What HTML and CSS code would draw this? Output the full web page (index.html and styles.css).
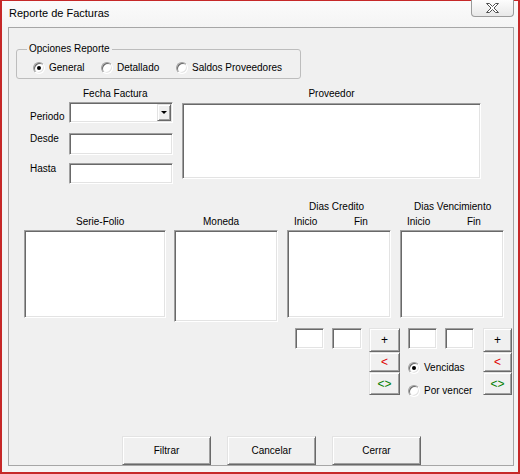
FILE: index.html
```html
<!DOCTYPE html>
<html>
<head>
<meta charset="utf-8">
<title>Reporte de Facturas</title>
<link rel="stylesheet" href="styles.css">
</head>
<body>
<div class="window">
  <div class="titlebar">
    <span class="title">Reporte de Facturas</span>
    <div class="close">
      <svg width="13" height="10" viewBox="0 0 13 10"><path d="M0.5 0.5h3l3 3 3-3h3l-4.5 4.5 4.5 4.5h-3l-3-3-3 3h-3l4.5-4.5z" fill="#fff" stroke="#505050" stroke-width="1"/></svg>
    </div>
  </div>
  <div class="client">
    <fieldset class="group">
      <legend>Opciones Reporte</legend>
      <div class="radios">
        <div class="radio"><span class="dot on"></span>General</div>
        <div class="radio"><span class="dot"></span>Detallado</div>
        <div class="radio"><span class="dot"></span>Saldos Proveedores</div>
      </div>
    </fieldset>

    <div class="row-b">
      <div class="fecha">
        <div class="hdr fecha-hdr">Fecha Factura</div>
        <div class="fecha-grid">
          <span class="lbl lbl-periodo">Periodo</span>
          <div class="sunken combo"><span class="btn combo-btn"><span class="tri"></span></span></div>
          <span class="lbl lbl-desde">Desde</span>
          <div class="sunken field field-desde"></div>
          <span class="lbl lbl-hasta">Hasta</span>
          <div class="sunken field field-hasta"></div>
        </div>
      </div>
      <div class="prov">
        <div class="hdr center">Proveedor</div>
        <div class="sunken prov-list"></div>
      </div>
    </div>

    <div class="row-c">
      <div class="col col-sf">
        <div class="h1"></div>
        <div class="h2 h2-sf">Serie-Folio</div>
        <div class="sunken list"></div>
      </div>
      <div class="col col-mon">
        <div class="h1"></div>
        <div class="h2 h2-mon">Moneda</div>
        <div class="sunken list list-mon"></div>
      </div>
      <div class="col col-dc">
        <div class="h1 h1-dc">Dias Credito</div>
        <div class="h2 sub"><span class="ini">Inicio</span><span>Fin</span></div>
        <div class="sunken list"></div>
      </div>
      <div class="col col-dv">
        <div class="h1 h1-dv">Dias Vencimiento</div>
        <div class="h2 sub"><span class="ini">Inicio</span><span>Fin</span></div>
        <div class="sunken list"></div>
      </div>
    </div>

    <div class="row-d">
      <div class="sunken small"></div>
      <div class="sunken small small-wide gap8"></div>
      <div class="btncol gap7">
        <button class="btn b1">+</button>
        <button class="btn b2 red">&lt;</button>
        <button class="btn b3 green">&lt;&gt;</button>
      </div>
      <div class="g2 gap8">
        <div class="g2-inputs">
          <div class="sunken small"></div>
          <div class="sunken small"></div>
        </div>
        <div class="g2-radios">
          <div class="radio"><span class="dot on"></span>Vencidas</div>
          <div class="radio"><span class="dot"></span>Por vencer</div>
        </div>
      </div>
      <div class="btncol btncol2 gap9">
        <button class="btn b1">+</button>
        <button class="btn b2 red">&lt;</button>
        <button class="btn b3 green">&lt;&gt;</button>
      </div>
    </div>

    <div class="row-e">
      <button class="btn big">Filtrar</button>
      <button class="btn big">Cancelar</button>
      <button class="btn big">Cerrar</button>
    </div>
  </div>
</div>
</body>
</html>
```

FILE: styles.css
```css
* { box-sizing: border-box; }
html, body { margin: 0; padding: 0; }
body {
  width: 520px;
  height: 474px;
  overflow: hidden;
  font-family: "Liberation Sans", Arial, sans-serif;
  font-size: 10px;
  color: #000;
  background: #fff;
}
.window {
  width: 520px;
  height: 474px;
  border: 2px solid #c62828;
  border-top-width: 1px;
  background: #f4f4f4;
  display: flex;
  flex-direction: column;
}
.titlebar {
  height: 26px;
  flex: none;
  display: flex;
  align-items: flex-start;
  padding-left: 7px;
  background: linear-gradient(#fbfbfb, #f4f4f4);
}
.title { font-size: 11px; line-height: 25px; }
.close {
  margin-left: auto;
  margin-top: -1px;
  margin-right: 4px;
  width: 43px;
  height: 17px;
  border: 1px solid #9b9b9b;
  border-top: none;
  border-radius: 0 0 4px 4px;
  background: linear-gradient(#fdfdfd, #e8e8e8);
  display: flex;
  align-items: center;
  justify-content: center;
}
.close svg { display: block; }
.client {
  flex: 1;
  margin: 0 4px 6px 6px;
  border: 1px solid #a6a6a6;
  background: #f0f0f0;
}

/* group box */
.group {
  margin: 15px 0 0 7px;
  width: 285px;
  padding: 0;
  border: 1px solid #bdbdbd;
  border-radius: 3px;
  min-inline-size: 0;
}
.group legend { margin-left: 10px; padding: 0 2px; line-height: 12px; }
.radios {
  display: grid;
  grid-template-columns: 68px 75px auto;
  padding: 6px 0 3px 16px;
}
.radio {
  display: flex;
  align-items: center;
  height: 14px;
  line-height: 14px;
  white-space: nowrap;
}
.dot {
  flex: none;
  position: relative;
  width: 12px;
  height: 12px;
  margin-right: 4px;
  border-radius: 50%;
  border: 1px solid;
  border-color: #a0a0a0 #fff #fff #a0a0a0;
  box-shadow: inset 1px 1px #696969, inset -1px -1px #e3e3e3;
  background: #fff;
}
.dot.on::after {
  content: "";
  position: absolute;
  left: 3px;
  top: 3px;
  width: 4px;
  height: 4px;
  border-radius: 50%;
  background: #000;
}

/* sunken fields */
.sunken {
  background: #fff;
  border: 1px solid;
  border-color: #a0a0a0 #fff #fff #a0a0a0;
  box-shadow: inset 1px 1px #696969, inset -1px -1px #e3e3e3;
}
/* raised buttons */
.btn {
  font: inherit;
  color: #000;
  padding: 0;
  margin: 0;
  background: #f0f0f0;
  border: 1px solid;
  border-color: #e3e3e3 #696969 #696969 #e3e3e3;
  box-shadow: inset 1px 1px #fff, inset -1px -1px #a0a0a0;
  display: flex;
  align-items: center;
  justify-content: center;
}

/* row B */
.row-b { display: flex; margin: 9px 0 0 21px; }
.hdr { height: 12px; line-height: 12px; white-space: nowrap; }
.center { text-align: center; }
.fecha { width: 143px; }
.fecha-hdr { padding-left: 53px; }
.fecha-grid {
  display: grid;
  grid-template-columns: 39px 104px;
  grid-template-rows: 21px 32px 29px;
  margin-top: 2px;
}
.lbl { align-self: start; line-height: 12px; }
.lbl-periodo { margin-top: 9px; }
.lbl-desde { margin-top: 10px; }
.lbl-hasta { margin-top: 8px; }
.field { align-self: end; }
.field-desde { height: 22px; }
.field-hasta { height: 21px; }
.combo { height: 21px; display: flex; justify-content: flex-end; padding: 1px; }
.combo-btn { width: 14px; height: 17px; }
.tri {
  width: 0;
  height: 0;
  border-left: 3px solid transparent;
  border-right: 3px solid transparent;
  border-top: 3px solid #000;
}
.prov { margin-left: 9px; width: 299px; }
.prov-list { margin-top: 3px; height: 76px; }

/* row C */
.row-c { display: flex; align-items: flex-start; margin: 17px 0 0 15px; }
.col { display: flex; flex-direction: column; }
.col-sf { width: 142px; }
.col-mon { width: 104px; margin-left: 8px; }
.col-dc { width: 104px; margin-left: 9px; }
.col-dv { width: 104px; margin-left: 9px; }
.h1 { height: 12px; line-height: 12px; white-space: nowrap; }
.h2 { margin-top: 3px; height: 12px; line-height: 12px; white-space: nowrap; }
.h2-sf { padding-left: 52px; }
.h2-mon { padding-left: 29px; }
.h1-dc { padding-left: 22px; }
.h1-dv { padding-left: 14px; }
.sub { display: flex; padding-left: 7px; }
.sub .ini { width: 60px; }
.list { margin-top: 2px; height: 88px; }
.list-mon { height: 92px; }

/* row D */
.row-d { display: flex; align-items: flex-start; margin: 6px 0 0 286px; }
.small { width: 29px; height: 21px; }
.small-wide { width: 30px; }
.gap7 { margin-left: 7px; }
.gap8 { margin-left: 8px; }
.gap9 { margin-left: 9px; }
.btncol { display: flex; flex-direction: column; width: 31px; }
.btncol2 { width: 29px; }
.btncol .btn { width: 100%; font-size: 12px; line-height: 12px; }
.b1 { height: 24px; }
.b2 { height: 20px; }
.b3 { height: 23px; }
.red { color: #e00000; }
.green { color: #008000; }
.g2 { display: flex; flex-direction: column; }
.g2-inputs { display: flex; gap: 8px; }
.g2-radios { display: flex; flex-direction: column; gap: 9px; margin-top: 12px; }

/* row E */
.row-e { display: flex; gap: 16px; margin: 38px 0 0 113px; }
.big { width: 89px; height: 29px; }
```
